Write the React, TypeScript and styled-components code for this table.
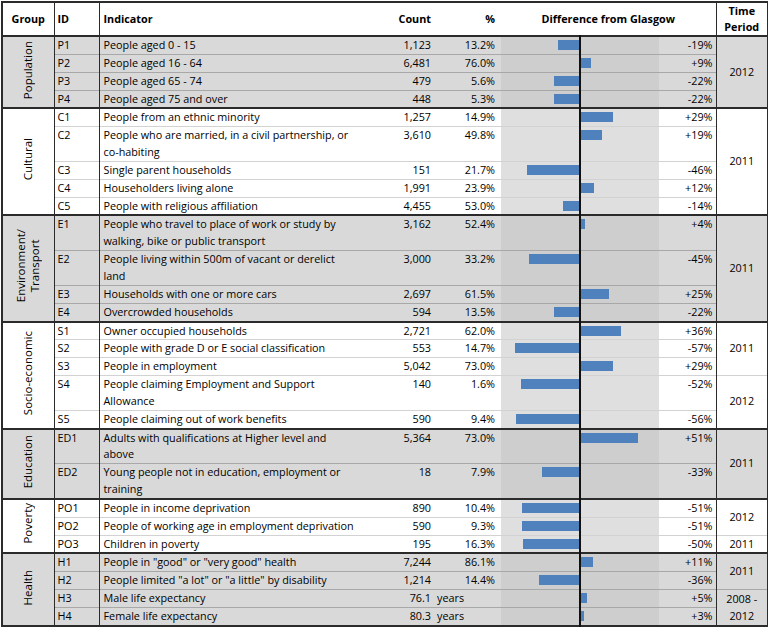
import React from 'react'
import styled, { createGlobalStyle } from 'styled-components'

const GlobalStyle = createGlobalStyle`
  html, body {
    margin: 0;
    padding: 0;
    background: #fff;
  }
  body {
    font-family: 'Open Sans', 'Liberation Sans', sans-serif;
    font-size: 10.8px;
    color: #000;
  }
`

const SCALE = 1.12
const LINE = '#2b2b2b'

interface Row {
  id: string
  label: string[]
  count: string
  pct: string
  pctLeft?: boolean
  diff: number
  time?: { text: string[]; span: number }
}

interface Group {
  name: string[]
  shaded: boolean
  rows: Row[]
}

const groups: Group[] = [
  {
    name: ['Population'],
    shaded: true,
    rows: [
      { id: 'P1', label: ['People aged 0 - 15'], count: '1,123', pct: '13.2%', diff: -19, time: { text: ['2012'], span: 4 } },
      { id: 'P2', label: ['People aged 16 - 64'], count: '6,481', pct: '76.0%', diff: 9 },
      { id: 'P3', label: ['People aged 65 - 74'], count: '479', pct: '5.6%', diff: -22 },
      { id: 'P4', label: ['People aged 75 and over'], count: '448', pct: '5.3%', diff: -22 },
    ],
  },
  {
    name: ['Cultural'],
    shaded: false,
    rows: [
      { id: 'C1', label: ['People from an ethnic minority'], count: '1,257', pct: '14.9%', diff: 29, time: { text: ['2011'], span: 5 } },
      { id: 'C2', label: ['People who are married, in a civil partnership, or', 'co-habiting'], count: '3,610', pct: '49.8%', diff: 19 },
      { id: 'C3', label: ['Single parent households'], count: '151', pct: '21.7%', diff: -46 },
      { id: 'C4', label: ['Householders living alone'], count: '1,991', pct: '23.9%', diff: 12 },
      { id: 'C5', label: ['People with religious affiliation'], count: '4,455', pct: '53.0%', diff: -14 },
    ],
  },
  {
    name: ['Environment/', 'Transport'],
    shaded: true,
    rows: [
      { id: 'E1', label: ['People who travel to place of work or study by', 'walking, bike or public transport'], count: '3,162', pct: '52.4%', diff: 4, time: { text: ['2011'], span: 4 } },
      { id: 'E2', label: ['People living within 500m of vacant or derelict', 'land'], count: '3,000', pct: '33.2%', diff: -45 },
      { id: 'E3', label: ['Households with one or more cars'], count: '2,697', pct: '61.5%', diff: 25 },
      { id: 'E4', label: ['Overcrowded households'], count: '594', pct: '13.5%', diff: -22 },
    ],
  },
  {
    name: ['Socio-economic'],
    shaded: false,
    rows: [
      { id: 'S1', label: ['Owner occupied households'], count: '2,721', pct: '62.0%', diff: 36, time: { text: ['2011'], span: 3 } },
      { id: 'S2', label: ['People with grade D or E social classification'], count: '553', pct: '14.7%', diff: -57 },
      { id: 'S3', label: ['People in employment'], count: '5,042', pct: '73.0%', diff: 29 },
      { id: 'S4', label: ['People claiming Employment and Support', 'Allowance'], count: '140', pct: '1.6%', diff: -52, time: { text: ['2012'], span: 2 } },
      { id: 'S5', label: ['People claiming out of work benefits'], count: '590', pct: '9.4%', diff: -56 },
    ],
  },
  {
    name: ['Education'],
    shaded: true,
    rows: [
      { id: 'ED1', label: ['Adults with qualifications at Higher level and', 'above'], count: '5,364', pct: '73.0%', diff: 51, time: { text: ['2011'], span: 2 } },
      { id: 'ED2', label: ['Young people not in education, employment or', 'training'], count: '18', pct: '7.9%', diff: -33 },
    ],
  },
  {
    name: ['Poverty'],
    shaded: false,
    rows: [
      { id: 'PO1', label: ['People in income deprivation'], count: '890', pct: '10.4%', diff: -51, time: { text: ['2012'], span: 2 } },
      { id: 'PO2', label: ['People of working age in employment deprivation'], count: '590', pct: '9.3%', diff: -51 },
      { id: 'PO3', label: ['Children in poverty'], count: '195', pct: '16.3%', diff: -50, time: { text: ['2011'], span: 1 } },
    ],
  },
  {
    name: ['Health'],
    shaded: true,
    rows: [
      { id: 'H1', label: ['People in "good" or "very good" health'], count: '7,244', pct: '86.1%', diff: 11, time: { text: ['2011'], span: 2 } },
      { id: 'H2', label: ['People limited "a lot" or "a little" by disability'], count: '1,214', pct: '14.4%', diff: -36 },
      { id: 'H3', label: ['Male life expectancy'], count: '76.1', pct: 'years', pctLeft: true, diff: 5, time: { text: ['2008 -', '2012'], span: 2 } },
      { id: 'H4', label: ['Female life expectancy'], count: '80.3', pct: 'years', pctLeft: true, diff: 3 },
    ],
  },
]

const columns = [52, 45, 262, 72, 68, 158, 57, 52]

const Table = styled.table`
  border-collapse: collapse;
  table-layout: fixed;
  width: 766px;
  margin: 1px 0 0 1px;
  border: 2px solid ${LINE};
  line-height: 16.85px;
`

const Col = styled.col<{ $w: number }>`
  width: ${(p) => p.$w}px;
`

const HeadCell = styled.th<{ $align: string; $divider?: boolean; $leftDivider?: boolean; $pad?: string }>`
  height: 31px;
  padding: 0 ${(p) => p.$pad ?? '0'};
  font-weight: 700;
  line-height: 16px;
  text-align: ${(p) => p.$align};
  vertical-align: middle;
  white-space: nowrap;
  border-right: ${(p) => (p.$divider ? `1px solid ${LINE}` : 'none')};
  border-left: ${(p) => (p.$leftDivider ? `1px solid ${LINE}` : 'none')};
`

const BodyRow = styled.tr<{ $first: boolean; $shade: boolean }>`
  border-top: ${(p) =>
    p.$first ? `2px solid ${LINE}` : `1px solid ${p.$shade ? '#a8a8a8' : '#d2d2d2'}`};
`

const Cell = styled.td<{ $shade: boolean }>`
  padding: 0;
  vertical-align: top;
  white-space: nowrap;
  background: ${(p) => (p.$shade ? '#d9d9d9' : '#ffffff')};
`

const GroupCell = styled(Cell)`
  text-align: center;
  vertical-align: middle;
  border-right: 1px solid ${LINE};
`

const GroupLabel = styled.div`
  display: inline-block;
  writing-mode: vertical-rl;
  transform: rotate(180deg);
  text-align: center;
  font-size: 11.5px;
  line-height: 14px;
`

const IdCell = styled(Cell)`
  padding-left: 3px;
  border-right: 1px solid ${LINE};
`

const TextCell = styled(Cell)`
  padding-left: 4px;
`

const NumCell = styled(Cell)<{ $right: number; $left?: boolean }>`
  text-align: ${(p) => (p.$left ? 'left' : 'right')};
  padding-right: ${(p) => (p.$left ? 0 : p.$right)}px;
  padding-left: ${(p) => (p.$left ? 4 : 0)}px;
`

const ChartCell = styled(Cell)`
  position: relative;
  background: ${(p) => (p.$shade ? '#cecece' : '#dfdfdf')};

  &::before {
    content: '';
    position: absolute;
    left: 78px;
    top: -2px;
    bottom: -2px;
    width: 2px;
    background: #111;
  }
`

const BarTrack = styled.div`
  display: flex;
  height: 16px;
  padding-top: 3px;
  box-sizing: border-box;
`

const Half = styled.div<{ $side: 'neg' | 'pos' }>`
  display: flex;
  width: ${(p) => (p.$side === 'neg' ? 78 : 80)}px;
  justify-content: ${(p) => (p.$side === 'neg' ? 'flex-end' : 'flex-start')};
  padding-left: ${(p) => (p.$side === 'pos' ? 2 : 0)}px;
  box-sizing: border-box;
`

const Bar = styled.div`
  height: 10px;
  background: #4f81bd;
`

const DiffCell = styled(Cell)`
  text-align: right;
  padding-right: 3px;
`

const TimeCell = styled(Cell)`
  text-align: center;
  vertical-align: middle;
  border-left: 1px solid ${LINE};
`

function formatDiff(v: number) {
  return v > 0 ? `+${v}%` : `${v}%`
}

function lines(text: string[]) {
  return text.map((t, i) => (
    <React.Fragment key={i}>
      {i > 0 && <br />}
      {t}
    </React.Fragment>
  ))
}

export default function App() {
  return (
    <>
      <GlobalStyle />
      <Table>
        <colgroup>
          {columns.map((w, i) => (
            <Col key={i} $w={w} />
          ))}
        </colgroup>
        <thead>
          <tr>
            <HeadCell $align="center" $divider>
              Group
            </HeadCell>
            <HeadCell $align="left" $divider $pad="3px">
              ID
            </HeadCell>
            <HeadCell $align="left" $pad="4px">
              Indicator
            </HeadCell>
            <HeadCell $align="right" $pad="2px">
              Count
            </HeadCell>
            <HeadCell $align="right" $pad="6px">
              %
            </HeadCell>
            <HeadCell $align="center" colSpan={2}>
              Difference from Glasgow
            </HeadCell>
            <HeadCell $align="center" $leftDivider>
              Time
              <br />
              Period
            </HeadCell>
          </tr>
        </thead>
        <tbody>
          {groups.map((g) =>
            g.rows.map((r, i) => (
              <BodyRow key={r.id} $first={i === 0} $shade={g.shaded}>
                {i === 0 && (
                  <GroupCell rowSpan={g.rows.length} $shade={g.shaded}>
                    <GroupLabel>{lines(g.name)}</GroupLabel>
                  </GroupCell>
                )}
                <IdCell $shade={g.shaded}>{r.id}</IdCell>
                <TextCell $shade={g.shaded}>{lines(r.label)}</TextCell>
                <NumCell $shade={g.shaded} $right={2}>
                  {r.count}
                </NumCell>
                <NumCell $shade={g.shaded} $right={6} $left={r.pctLeft}>
                  {r.pct}
                </NumCell>
                <ChartCell $shade={g.shaded}>
                  <BarTrack>
                    <Half $side="neg">
                      {r.diff < 0 && <Bar style={{ width: -r.diff * SCALE }} />}
                    </Half>
                    <Half $side="pos">
                      {r.diff > 0 && <Bar style={{ width: r.diff * SCALE }} />}
                    </Half>
                  </BarTrack>
                </ChartCell>
                <DiffCell $shade={g.shaded}>{formatDiff(r.diff)}</DiffCell>
                {r.time && (
                  <TimeCell rowSpan={r.time.span} $shade={g.shaded}>
                    {lines(r.time.text)}
                  </TimeCell>
                )}
              </BodyRow>
            ))
          )}
        </tbody>
      </Table>
    </>
  )
}
